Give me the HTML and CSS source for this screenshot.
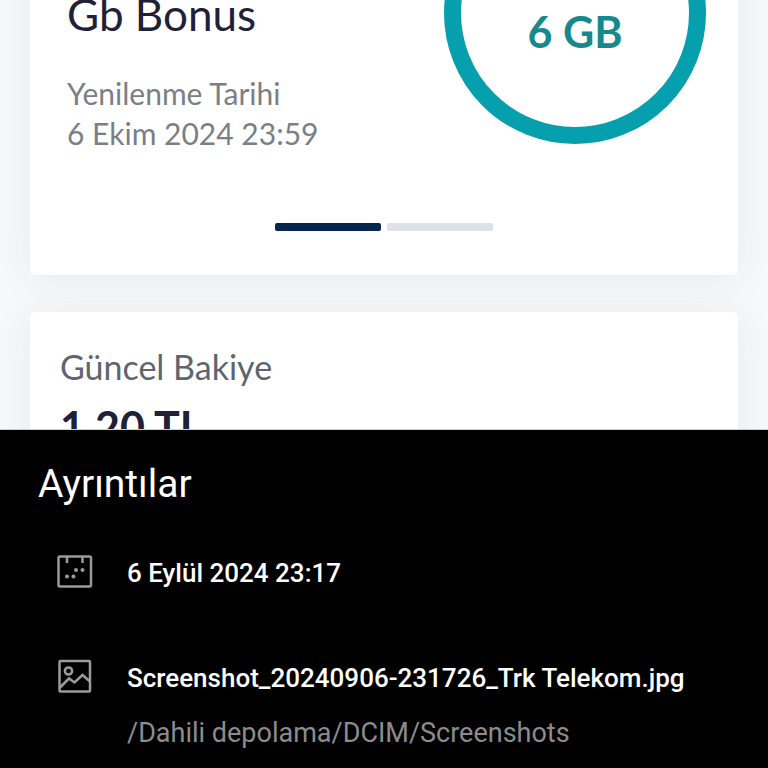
FILE: index.html
```
<!DOCTYPE html>
<html lang="tr">
<head>
  <meta charset="UTF-8">
  <meta name="viewport" content="width=device-width, initial-scale=1.0">
  <title>Ayrıntılar</title>
  <link rel="stylesheet" href="styles.css">
</head>
<body>
  <main class="preview">
    <section class="card usage">
      <div class="usage-row">
        <div class="plan">
          <h2>Gb Bonus</h2>
          <p>Yenilenme Tarihi<br>6 Ekim 2024 23:59</p>
        </div>
        <div class="ring">6 GB</div>
      </div>
      <div class="pager">
        <span class="active"></span>
        <span></span>
      </div>
    </section>
    <section class="card balance">
      <p>Güncel Bakiye</p>
      <strong>1,20 TL</strong>
    </section>
  </main>

  <section class="details">
    <h1>Ayrıntılar</h1>
    <ul>
      <li>
        <svg class="icon" viewBox="0 0 36 36" aria-hidden="true">
          <rect x="1.500" y="2.500" width="32.500" height="30" rx="1.500"/>
          <path d="M10 3v6M25.500 3v6"/>
          <g class="dots">
            <circle cx="19" cy="16" r="2"/>
            <circle cx="25.500" cy="16" r="2"/>
            <circle cx="10" cy="22.500" r="2"/>
            <circle cx="16.500" cy="22.500" r="2"/>
          </g>
        </svg>
        <div class="text">
          <b>6 Eylül 2024 23:17</b>
        </div>
      </li>
      <li>
        <svg class="icon" viewBox="0 0 36 36" aria-hidden="true">
          <rect x="2.500" y="2" width="30.500" height="30.500" rx="1"/>
          <circle cx="11.500" cy="12" r="3.600"/>
          <path d="M2.500 29l9.500-9.500 5.500 4 8-7.500 7.500 6.500"/>
        </svg>
        <div class="text">
          <b>Screenshot_20240906-231726_Trk Telekom.jpg</b>
          <span>/Dahili depolama/DCIM/Screenshots</span>
        </div>
      </li>
    </ul>
  </section>
</body>
</html>
```
FILE: styles.css
```
* {
    box-sizing: border-box;
}
body {
    display: flex;
    flex-direction: column;
    height: 100vh;
    margin: 0;
    overflow: hidden;
    background: #000;
}
h1, h2, p, ul {
    margin: 0;
    padding: 0;
    font-weight: 400;
}

/* phone screen, scrolled part of the way down */
.preview {
    flex: 1;
    min-height: 0;
    overflow: hidden;
    padding: 0 30px;
    background: #f7f8fa;
    border-bottom: 1px solid #ccd0d0;
    font-family: Lato, "Open Sans", sans-serif;
}
.card {
    background: #fff;
    border-radius: 5px;
    box-shadow: 0 4px 40px rgba(50, 50, 50, 0.07);
}
.usage {
    margin-top: -160px;
    margin-bottom: 37px;
    padding: 42px 32px 44px;
}
.usage-row {
    display: flex;
    justify-content: space-between;
}
.plan {
    padding-top: 108px;
    padding-left: 5px;
}
.plan h2 {
    margin-bottom: 35px;
    color: #1f2138;
    font-size: 44px;
    line-height: 48px;
}
.plan p {
    color: #7a7f87;
    font-size: 30px;
    line-height: 40px;
}
.ring {
    display: flex;
    align-items: center;
    justify-content: center;
    width: 262px;
    height: 262px;
    padding-top: 36px;
    border: 17px solid #069fad;
    border-radius: 50%;
    color: #15898d;
    font-size: 43px;
    font-weight: 700;
}
.pager {
    display: flex;
    justify-content: center;
    gap: 6px;
    margin-top: 70px;
}
.pager span {
    width: 106px;
    height: 8px;
    border-radius: 2px;
    background: #dde1e9;
}
.pager .active {
    background: #06264d;
}
.balance {
    padding: 32px 30px;
}
.balance p {
    color: #5f656f;
    font-size: 34px;
    line-height: 46px;
}
.balance strong {
    display: block;
    color: #1f2138;
    font-size: 43px;
    line-height: 74px;
}

.details {
    padding: 29px 38px 15px;
    color: #fff;
    font-family: Roboto, sans-serif;
}
.details h1 {
    font-size: 39px;
    line-height: 50px;
}
.details ul {
    display: flex;
    flex-direction: column;
    gap: 65px;
    margin-top: 44px;
    padding-left: 19px;
    list-style: none;
}
.details li {
    display: flex;
    gap: 34px;
}
.icon {
    flex: none;
    width: 36px;
    height: 36px;
    margin-top: 1px;
    fill: none;
    stroke: #9b9b9b;
    stroke-width: 2.5;
}
.dots {
    fill: #9b9b9b;
    stroke: none;
}
.text {
    display: flex;
    flex-direction: column;
    gap: 15px;
    font-size: 26px;
    line-height: 40px;
}
.text b {
    font-weight: 500;
}
.text span {
    color: #8c8c8c;
    font-size: 27px;
}
```
